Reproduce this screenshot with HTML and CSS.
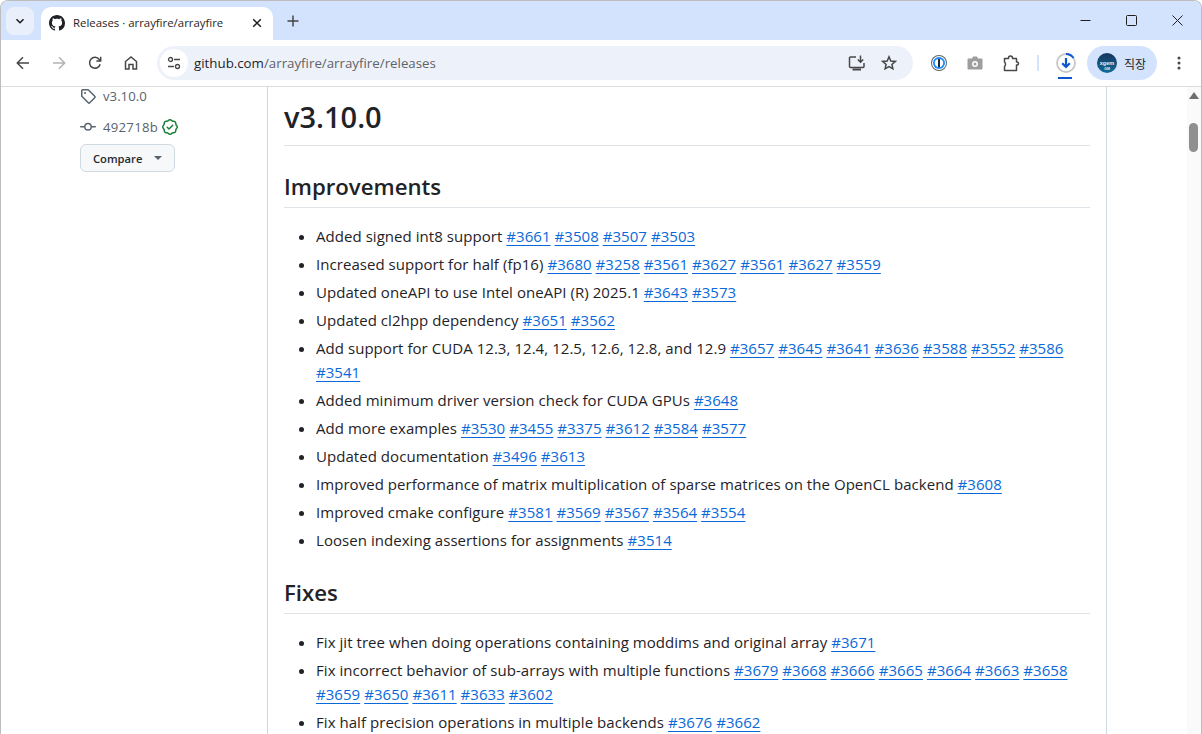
FILE: index.html
```html
<!DOCTYPE html>
<html lang="en">
<head>
<meta charset="utf-8">
<title>Releases · arrayfire/arrayfire</title>
<link rel="stylesheet" href="styles.css">
</head>
<body>
<div class="window">
  <div class="tabstrip">
    <button class="tabsearch"><svg width="12" height="12" viewBox="0 0 12 12"><path d="M2.500 4.200 6 7.700l3.500-3.500" fill="none" stroke="#1f1f1f" stroke-width="1.600"/></svg></button>
    <div class="tab">
      <svg class="favicon" width="16" height="16" viewBox="0 0 16 16"><path fill="#1f2328" d="M8 0C3.580 0 0 3.580 0 8c0 3.540 2.290 6.530 5.470 7.590.4.070.55-.17.55-.38 0-.19-.01-.82-.01-1.490-2.010.37-2.530-.49-2.690-.94-.09-.23-.48-.94-.82-1.130-.28-.15-.68-.52-.01-.53.63-.01 1.080.58 1.230.82.72 1.210 1.870.87 2.330.66.07-.52.28-.87.51-1.070-1.780-.2-3.640-.89-3.640-3.950 0-.87.31-1.590.82-2.150-.08-.2-.36-1.020.08-2.120 0 0 .67-.21 2.200.82.64-.18 1.320-.27 2-.27s1.360.09 2 .27c1.530-1.040 2.200-.82 2.200-.82.44 1.100.16 1.920.08 2.120.51.56.82 1.270.82 2.150 0 3.070-1.870 3.750-3.650 3.950.29.25.54.73.54 1.480 0 1.070-.01 1.930-.01 2.200 0 .21.15.46.55.38A8.010 8.010 0 0 0 16 8c0-4.420-3.580-8-8-8Z"/></svg>
      <span class="tabtitle">Releases · arrayfire/arrayfire</span>
      <svg class="tabclose" width="10" height="10" viewBox="0 0 10 10"><path d="M1.200 1.200l7.600 7.600M8.800 1.200 1.200 8.800" stroke="#1f1f1f" stroke-width="1.500"/></svg>
    </div>
    <svg class="newtab" width="12" height="12" viewBox="0 0 12 12"><path d="M6 .5v11M.5 6h11" stroke="#444" stroke-width="1.500"/></svg>
    <div class="winctrls">
      <svg width="11" height="11" viewBox="0 0 11 11"><path d="M.5 5.500h10" stroke="#1f1f1f"/></svg>
      <svg width="11" height="11" viewBox="0 0 11 11"><rect x=".5" y=".5" width="10" height="10" rx="1" fill="none" stroke="#1f1f1f"/></svg>
      <svg width="11" height="11" viewBox="0 0 11 11"><path d="M.5.5l10 10M10.500.5l-10 10" stroke="#1f1f1f"/></svg>
    </div>
  </div>
  <div class="toolbar">
    <div class="navbtns">
      <svg width="16" height="16" viewBox="0 0 16 16"><path d="M14 8H2.500M8 2.300 2.300 8 8 13.700" fill="none" stroke="#474747" stroke-width="1.500"/></svg>
      <svg width="16" height="16" viewBox="0 0 16 16"><path d="M2 8h11.500M8 2.300 13.700 8 8 13.700" fill="none" stroke="#b4b4b4" stroke-width="1.500"/></svg>
      <svg width="16" height="16" viewBox="0 0 16 16"><path d="M13.200 9.200A5.400 5.400 0 1 1 12.300 4.500L13.500 5.800M13.700 1.800v4.300H9.400" fill="none" stroke="#474747" stroke-width="1.500"/></svg>
      <svg width="16" height="16" viewBox="0 0 16 16"><path d="M2.500 14V6.500L8 2l5.500 4.500V14H10V9.500H6V14Z" fill="none" stroke="#474747" stroke-width="1.500"/></svg>
    </div>
    <div class="omnibox">
      <span class="sitebtn"><svg width="14" height="14" viewBox="0 0 14 14"><g fill="none" stroke="#474747" stroke-width="1.300"><circle cx="3.500" cy="3.500" r="2"/><path d="M7 3.500h6M1 10.500h6"/><circle cx="10.500" cy="10.500" r="2"/></g></svg></span>
      <span class="url">github.com<span class="urlpath">/arrayfire/arrayfire/releases</span></span>
      <svg class="omni-install" width="18" height="16" viewBox="0 0 18 16"><path d="M8 2H2.500a1 1 0 0 0-1 1v8.500a1 1 0 0 0 1 1h12.500a1 1 0 0 0 1-1V8" fill="none" stroke="#474747" stroke-width="1.500"/><path d="M4.500 14.500h8.500" stroke="#474747" stroke-width="2"/><path d="M12.500.5v6.500M9.800 4.500l2.700 2.700 2.700-2.700" fill="none" stroke="#474747" stroke-width="1.500"/></svg>
      <svg class="omni-star" width="16" height="16" viewBox="0 0 16 16"><path d="M8 1.800l1.800 4.200 4.500.4-3.400 3 1 4.400L8 11.500l-3.900 2.300 1-4.400-3.400-3 4.500-.4Z" fill="none" stroke="#474747" stroke-width="1.500"/></svg>
    </div>
    <div class="extensions">
      <svg width="16" height="16" viewBox="0 0 16 16"><circle cx="8" cy="8" r="8" fill="#5f6368"/><circle cx="8" cy="8" r="7" fill="#fff"/><circle cx="8" cy="8" r="6" fill="#1a8cff"/><circle cx="8" cy="8" r="4.200" fill="#fff"/><rect x="7" y="3.800" width="2" height="8.400" rx=".5" fill="#1b2a3d"/></svg>
      <svg width="16" height="14" viewBox="0 0 16 14"><path fill="#9e9e9e" d="M1.500 2.500H5L6 .5h4l1 2h3.500a1 1 0 0 1 1 1v9a1 1 0 0 1-1 1h-13a1 1 0 0 1-1-1v-9a1 1 0 0 1 1-1Z"/><circle cx="8" cy="8" r="3" fill="#fff"/><circle cx="8" cy="8" r="1.500" fill="#9e9e9e"/></svg>
      <svg width="17" height="17" viewBox="0 0 17 17"><path d="M1.500 3.500H5.500V3a2 2 0 0 1 4 0v.5H13.500V7h.5a1.500 1.500 0 0 1 0 3h-.5v5.500H1.500V11.500a3 3 0 0 0 0-4.500Z" fill="none" stroke="#474747" stroke-width="1.500" stroke-linejoin="round"/></svg>
    </div>
    <span class="divider"></span>
    <div class="downloads">
      <svg width="22" height="22" viewBox="0 0 22 22"><circle cx="11" cy="11" r="9" fill="none" stroke="#c7c7c7" stroke-width="1.800"/><path d="M11 2a9 9 0 0 1 7.500 4" fill="none" stroke="#0b57d0" stroke-width="1.800"/><path d="M11 6v9M7.200 11.200 11 15l3.800-3.800" fill="none" stroke="#0b57d0" stroke-width="2.200"/></svg>
      <span class="dlbar"></span>
    </div>
    <div class="profile">
      <svg class="avatar" width="20" height="20" viewBox="0 0 20 20"><defs><linearGradient id="av" x1="0" y1="0" x2="0" y2="1"><stop offset="0" stop-color="#16345c"/><stop offset="1" stop-color="#0f6d99"/></linearGradient></defs><circle cx="10" cy="10" r="10" fill="url(#av)"/><text class="av-name" x="10" y="11.500" text-anchor="middle">xgem</text><text class="av-sub" x="10" y="17" text-anchor="middle">GM</text></svg>
      <span class="profname">직장</span>
    </div>
    <svg class="kebab" width="4" height="14" viewBox="0 0 4 14"><circle cx="2" cy="2" r="1.500" fill="#474747"/><circle cx="2" cy="7" r="1.500" fill="#474747"/><circle cx="2" cy="12" r="1.500" fill="#474747"/></svg>
  </div>
  <div class="page">
    <aside class="sidebar">
      <div class="meta meta-tag">
        <svg width="16" height="16" viewBox="0 0 16 16"><path fill="#59636e" d="M1 7.775V2.750C1 1.784 1.784 1 2.750 1h5.025c.464 0 .91.184 1.238.513l6.250 6.250a1.750 1.750 0 0 1 0 2.474l-5.026 5.026a1.750 1.750 0 0 1-2.474 0l-6.250-6.250A1.752 1.752 0 0 1 1 7.775Zm1.500 0c0 .066.026.13.073.177l6.250 6.250a.25.25 0 0 0 .354 0l5.025-5.025a.25.25 0 0 0 0-.354l-6.250-6.250a.25.25 0 0 0-.177-.073H2.750a.25.25 0 0 0-.25.250ZM6 5a1 1 0 1 1-2 0 1 1 0 0 1 2 0Z"/></svg>
        <span>v3.10.0</span>
      </div>
      <div class="meta meta-commit">
        <svg width="16" height="16" viewBox="0 0 16 16"><path fill="#59636e" d="M11.930 8.500a4.002 4.002 0 0 1-7.860 0H.750a.75.75 0 0 1 0-1.500h3.320a4.002 4.002 0 0 1 7.860 0h3.320a.75.75 0 0 1 0 1.500Zm-1.430-.75a2.500 2.500 0 1 0-5 0 2.500 2.500 0 0 0 5 0Z"/></svg>
        <span>492718b</span>
        <svg class="verified" width="16" height="16" viewBox="0 0 16 16"><path fill="#1a7f37" d="m9.585.52.929.68c.153.112.331.186.518.215l1.138.175a2.678 2.678 0 0 1 2.240 2.240l.174 1.139c.029.187.103.365.215.518l.68.928a2.677 2.677 0 0 1 0 3.170l-.68.928a1.174 1.174 0 0 0-.215.518l-.175 1.138a2.678 2.678 0 0 1-2.241 2.241l-1.138.175a1.170 1.170 0 0 0-.518.215l-.928.68a2.677 2.677 0 0 1-3.170 0l-.928-.68a1.174 1.174 0 0 0-.518-.215L3.830 14.410a2.678 2.678 0 0 1-2.240-2.240l-.175-1.138a1.170 1.170 0 0 0-.215-.518l-.68-.928a2.677 2.677 0 0 1 0-3.170l.68-.928c.112-.153.186-.331.215-.518l.175-1.140a2.678 2.678 0 0 1 2.240-2.240l1.139-.175c.187-.029.365-.103.518-.215l.928-.68a2.677 2.677 0 0 1 3.170 0ZM7.303 1.728l-.927.68a2.670 2.670 0 0 1-1.180.489l-1.137.174a1.179 1.179 0 0 0-.987.987l-.174 1.136a2.677 2.677 0 0 1-.489 1.180l-.68.928a1.180 1.180 0 0 0 0 1.394l.68.927c.256.348.424.753.489 1.180l.174 1.137c.078.509.478.909.987.987l1.136.174a2.670 2.670 0 0 1 1.180.489l.928.68c.414.305.979.305 1.394 0l.927-.68a2.670 2.670 0 0 1 1.180-.489l1.137-.174a1.180 1.180 0 0 0 .987-.987l.174-1.136a2.670 2.670 0 0 1 .489-1.180l.68-.928a1.176 1.176 0 0 0 0-1.394l-.68-.927a2.686 2.686 0 0 1-.489-1.180l-.174-1.137a1.179 1.179 0 0 0-.987-.987l-1.136-.174a2.677 2.677 0 0 1-1.180-.489l-.928-.68a1.176 1.176 0 0 0-1.394 0ZM11.280 6.780l-3.750 3.750a.75.75 0 0 1-1.060 0L4.720 8.780a.751.751 0 0 1 1.060-1.060L7 8.940l3.220-3.220a.751.751 0 0 1 1.060 1.060Z"/></svg>
      </div>
      <button class="compare">Compare<span class="caret"></span></button>
    </aside>
    <main class="content">
      <h1 class="rel-title">v3.10.0</h1>
      <h2 class="section">Improvements</h2>
      <ul class="notes">
        <li>Added signed int8 support <a>#3661</a> <a>#3508</a> <a>#3507</a> <a>#3503</a></li>
        <li>Increased support for half (fp16) <a>#3680</a> <a>#3258</a> <a>#3561</a> <a>#3627</a> <a>#3561</a> <a>#3627</a> <a>#3559</a></li>
        <li>Updated oneAPI to use Intel oneAPI (R) 2025.1 <a>#3643</a> <a>#3573</a></li>
        <li>Updated cl2hpp dependency <a>#3651</a> <a>#3562</a></li>
        <li>Add support for CUDA 12.3, 12.4, 12.5, 12.6, 12.8, and 12.9 <a>#3657</a> <a>#3645</a> <a>#3641</a> <a>#3636</a> <a>#3588</a> <a>#3552</a> <a>#3586</a> <a>#3541</a></li>
        <li>Added minimum driver version check for CUDA GPUs <a>#3648</a></li>
        <li>Add more examples <a>#3530</a> <a>#3455</a> <a>#3375</a> <a>#3612</a> <a>#3584</a> <a>#3577</a></li>
        <li>Updated documentation <a>#3496</a> <a>#3613</a></li>
        <li>Improved performance of matrix multiplication of sparse matrices on the OpenCL backend <a>#3608</a></li>
        <li>Improved cmake configure <a>#3581</a> <a>#3569</a> <a>#3567</a> <a>#3564</a> <a>#3554</a></li>
        <li>Loosen indexing assertions for assignments <a>#3514</a></li>
      </ul>
      <h2 class="section section-fixes">Fixes</h2>
      <ul class="notes">
        <li>Fix jit tree when doing operations containing moddims and original array <a>#3671</a></li>
        <li>Fix incorrect behavior of sub-arrays with multiple functions <a>#3679</a> <a>#3668</a> <a>#3666</a> <a>#3665</a> <a>#3664</a> <a>#3663</a> <a>#3658</a> <a>#3659</a> <a>#3650</a> <a>#3611</a> <a>#3633</a> <a>#3602</a></li>
        <li>Fix half precision operations in multiple backends <a>#3676</a> <a>#3662</a></li>
      </ul>
    </main>
    <div class="gutter"></div>
    <div class="scrollbar">
      <svg class="sb-up" width="10" height="7" viewBox="0 0 10 7"><path d="M5 0l5 7H0Z" fill="#6e6e6e"/></svg>
      <span class="sb-thumb"></span>
    </div>
  </div>
</div>
</body>
</html>
```

FILE: styles.css
```css
* { box-sizing: border-box; }
html, body { margin: 0; height: 100%; overflow: hidden; }
body { font-family: "Open Sans", "Noto Sans", sans-serif; color: #1f2328; background: #fff; }
svg { display: block; flex: none; }
button { font: inherit; border: 0; padding: 0; }

.window { width: 1202px; height: 734px; display: flex; flex-direction: column; border: 1px solid #bdbdbd; border-width: 1px 1px 0 1px; border-radius: 8px 8px 0 0; overflow: hidden; }

.tabstrip { height: 39px; flex: none; background: #d3e3fd; display: flex; align-items: flex-end; padding-left: 5px; position: relative; }
.tabsearch { width: 28px; height: 28px; border-radius: 8px; background: #e9f0fc; display: flex; align-items: center; justify-content: center; margin: 0 7px 5px 0; }
.tab { width: 232px; height: 33px; background: #fff; border-radius: 10px 10px 0 0; display: flex; align-items: center; padding: 0 11px 2px 8px; }
.favicon { margin-right: 8px; }
.tabtitle { flex: 1; font: 11.4px "Open Sans", sans-serif; color: #1f1f1f; white-space: nowrap; }
.newtab { margin: 0 0 13px 14px; }
.winctrls { margin-left: auto; display: flex; align-self: flex-start; gap: 35px; padding: 14px 18px 0 0; }

.toolbar { height: 47px; flex: none; background: #fff; border-bottom: 1px solid #dadce0; display: flex; align-items: center; padding-left: 14px; }
.navbtns { display: flex; gap: 20px; }
.omnibox { width: 756px; height: 34px; margin-left: 18px; border-radius: 17px; background: #edf2fa; display: flex; align-items: center; padding: 0 16px 0 3px; }
.sitebtn { width: 28px; height: 28px; border-radius: 50%; background: #fff; display: flex; align-items: center; justify-content: center; margin-right: 6px; }
.url { flex: 1; font: 13.3px "Open Sans", sans-serif; color: #1f1f1f; }
.urlpath { color: #5f6368; }
.omni-star { margin-left: 15px; }
.extensions { display: flex; align-items: center; gap: 20px; margin-left: 18px; }
.divider { width: 2px; height: 16px; background: #d3e3fd; margin: 0 16px 0 17px; }
.downloads { width: 22px; position: relative; }
.dlbar { position: absolute; left: 3px; bottom: -5px; width: 14px; height: 2px; background: #0b57d0; }
.profile { width: 70px; height: 34px; border-radius: 17px; background: #d3e3fd; margin-left: 10px; display: flex; align-items: center; gap: 7px; padding-left: 10px; }
.av-name { font: 600 5.5px "Liberation Sans", sans-serif; fill: #e8f1f8; }
.av-sub { font: 600 3.500px "Liberation Sans", sans-serif; fill: #e8f1f8; }
.profname { font: 12px "Noto Sans CJK KR", sans-serif; color: #1f1f1f; }
.kebab { margin-left: 20px; }

.page { flex: 1; min-height: 0; display: flex; }
.sidebar { width: 266px; flex: none; padding: 0 0 0 79px; }
.meta { display: flex; align-items: center; font-size: 13.2px; color: #59636e; }
.meta-tag { height: 18px; gap: 7px; }
.meta-commit { height: 20px; gap: 7px; margin-top: 12px; letter-spacing: .25px; }
.verified { margin-left: -3px; }
.compare { margin-top: 7px; width: 95px; height: 28px; border: 1px solid #d1d9e0; border-radius: 6px; background: #f6f8fa; font-size: 11.2px; font-weight: 600; color: #25292e; display: flex; align-items: center; padding-left: 12px; }
.caret { margin-left: 12px; border: 4px solid transparent; border-top-color: #59636e; border-bottom: 0; }

.content { width: 840px; flex: none; height: 100%; overflow: hidden; border-left: 1px solid #d1d9e0; border-right: 1px solid #d1d9e0; padding: 0 16px; font-size: 15px; line-height: 24px; letter-spacing: .05px; }
.rel-title { margin: 0; height: 59px; padding-top: 7px; font-size: 29px; line-height: 46px; font-weight: 600; letter-spacing: 0; border-bottom: 1px solid #d1d9e0b3; }
.section { margin: 24px 0 16px; height: 38px; font-size: 22.2px; line-height: 34px; font-weight: 600; letter-spacing: 0; border-bottom: 1px solid #d1d9e0b3; }
.section-fixes { margin-top: 24px; }
.notes { margin: 0; padding: 0 0 0 32px; }
.notes li { margin-top: 4px; }
.notes li:first-child { margin-top: 0; }
.notes a { color: #0969da; text-decoration: underline; text-underline-offset: 3px; }

.gutter { width: 80px; flex: none; }
.scrollbar { width: 15px; flex: none; background: #fafafa; position: relative; }
.sb-up { margin: 5px 0 0 2px; }
.sb-thumb { position: absolute; left: 2px; top: 36px; width: 9px; height: 29px; border-radius: 5px; background: #8f8f8f; }
```
